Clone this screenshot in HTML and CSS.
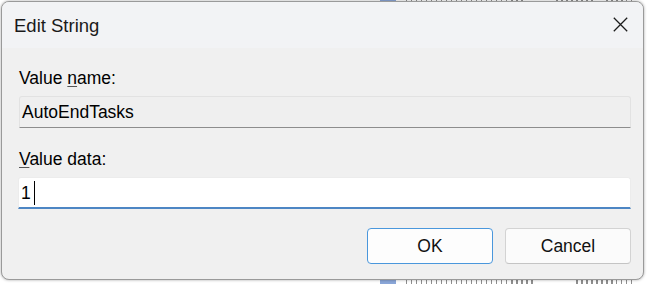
FILE: index.html
```html
<!DOCTYPE html>
<html>
<head>
<meta charset="utf-8">
<link rel="stylesheet" href="styles.css">
</head>
<body>
<div class="backdrop">
  <div class="bg-row bg-top"><span class="bg-ico"></span><span class="bg-word w1"></span><span class="bg-word w2"></span><span class="bg-word w3"></span></div>
  <div class="bg-row bg-bottom"><span class="bg-ico"></span><span class="bg-word w4"></span><span class="bg-word w5"></span></div>
</div>
<div class="window">
  <div class="titlebar">
    <span class="title">Edit String</span>
    <svg class="close" width="15" height="15" viewBox="0 0 15 15"><path d="M0.8 0.8 L14.2 14.2 M14.2 0.8 L0.8 14.2" stroke="#1b1b1b" stroke-width="1.25" fill="none"/></svg>
  </div>
  <div class="content">
    <div class="label label-name">Value <u>n</u>ame:</div>
    <div class="field field-readonly">AutoEndTasks</div>
    <div class="label label-data"><u>V</u>alue data:</div>
    <div class="field field-edit"><span>1</span><span class="caret"></span></div>
    <div class="buttons">
      <div class="btn btn-default">OK</div>
      <div class="btn">Cancel</div>
    </div>
  </div>
</div>
</body>
</html>
```

FILE: styles.css
```css
html, body {
  margin: 0;
  padding: 0;
}
body {
  width: 648px;
  height: 284px;
  overflow: hidden;
  background: #ffffff;
  font-family: "Liberation Sans", Arial, sans-serif;
  color: #000;
  position: relative;
}
.backdrop {
  position: absolute;
  left: 0;
  top: 0;
  width: 648px;
  height: 284px;
  z-index: 0;
}
.bg-row {
  position: absolute;
  left: 380px;
  display: flex;
  align-items: stretch;
  gap: 10px;
  height: 12px;
}
.bg-top { top: -9px; }
.bg-bottom { top: 280px; }
.bg-ico {
  width: 16px;
  background: #8aa6d8;
}
.bg-word {
  background: repeating-linear-gradient(90deg, #444 0 1.5px, transparent 1.5px 5px);
  opacity: 0.6;
}
.w1 { width: 120px; }
.w2 { width: 40px; margin-left: 20px; }
.w3 { width: 30px; }
.w4 { width: 130px; }
.w5 { width: 60px; margin-left: 30px; }

.window {
  position: relative;
  z-index: 1;
  box-sizing: border-box;
  margin: 1px 0 0 1px;
  width: 643px;
  height: 279px;
  border: 1px solid #9a9a9a;
  border-radius: 8px;
  overflow: hidden;
  background: #f0f0f0;
  box-shadow: 0 0 3px rgba(0,0,0,0.35);
  display: flex;
  flex-direction: column;
}
.titlebar {
  height: 46px;
  flex: none;
  background: #f2f3f5;
  display: flex;
  justify-content: space-between;
  align-items: flex-start;
  padding: 0 15px 0 12px;
}
.title {
  font-size: 18.5px;
  line-height: 20px;
  margin-top: 14px;
  color: #1a1a1a;
}
.close {
  margin-top: 15px;
  display: block;
}
.content {
  flex: 1;
  display: flex;
  flex-direction: column;
  padding: 20px 12px 0 16px;
}
.label {
  font-size: 17.5px;
  line-height: 20px;
  padding-left: 1px;
}
.label u {
  text-decoration-color: #555;
  text-underline-offset: 2px;
}
.label-data { margin-top: 21px; }
.field {
  box-sizing: border-box;
  height: 32px;
  margin-top: 8px;
  font-size: 17.5px;
  line-height: 20px;
  display: flex;
  align-items: center;
  padding: 0 2px;
}
.field-readonly {
  background: #efefef;
  border: 1px solid #e2e2e2;
  border-bottom: 1px solid #8d8d8d;
  border-radius: 3px 3px 0 0;
  margin-left: 1px;
}
.field-edit {
  background: #ffffff;
  border: 1px solid #ececec;
  border-bottom: 2px solid #4d86c4;
  border-radius: 3px 3px 0 0;
  padding-left: 2px;
}
.caret {
  display: inline-block;
  width: 1px;
  height: 24px;
  background: #000;
  margin-left: 3px;
}
.buttons {
  display: flex;
  justify-content: flex-end;
  gap: 12px;
  margin-top: 19px;
}
.btn {
  box-sizing: border-box;
  width: 126px;
  height: 36px;
  border: 1px solid #d3d3d3;
  border-bottom-color: #c4c4c4;
  border-radius: 4px;
  background: #fbfbfb;
  font-size: 17.5px;
  display: flex;
  align-items: center;
  justify-content: center;
  color: #111;
}
.btn-default {
  border: 1px solid #4a97dc;
  background: #fdfdfd;
}
```
